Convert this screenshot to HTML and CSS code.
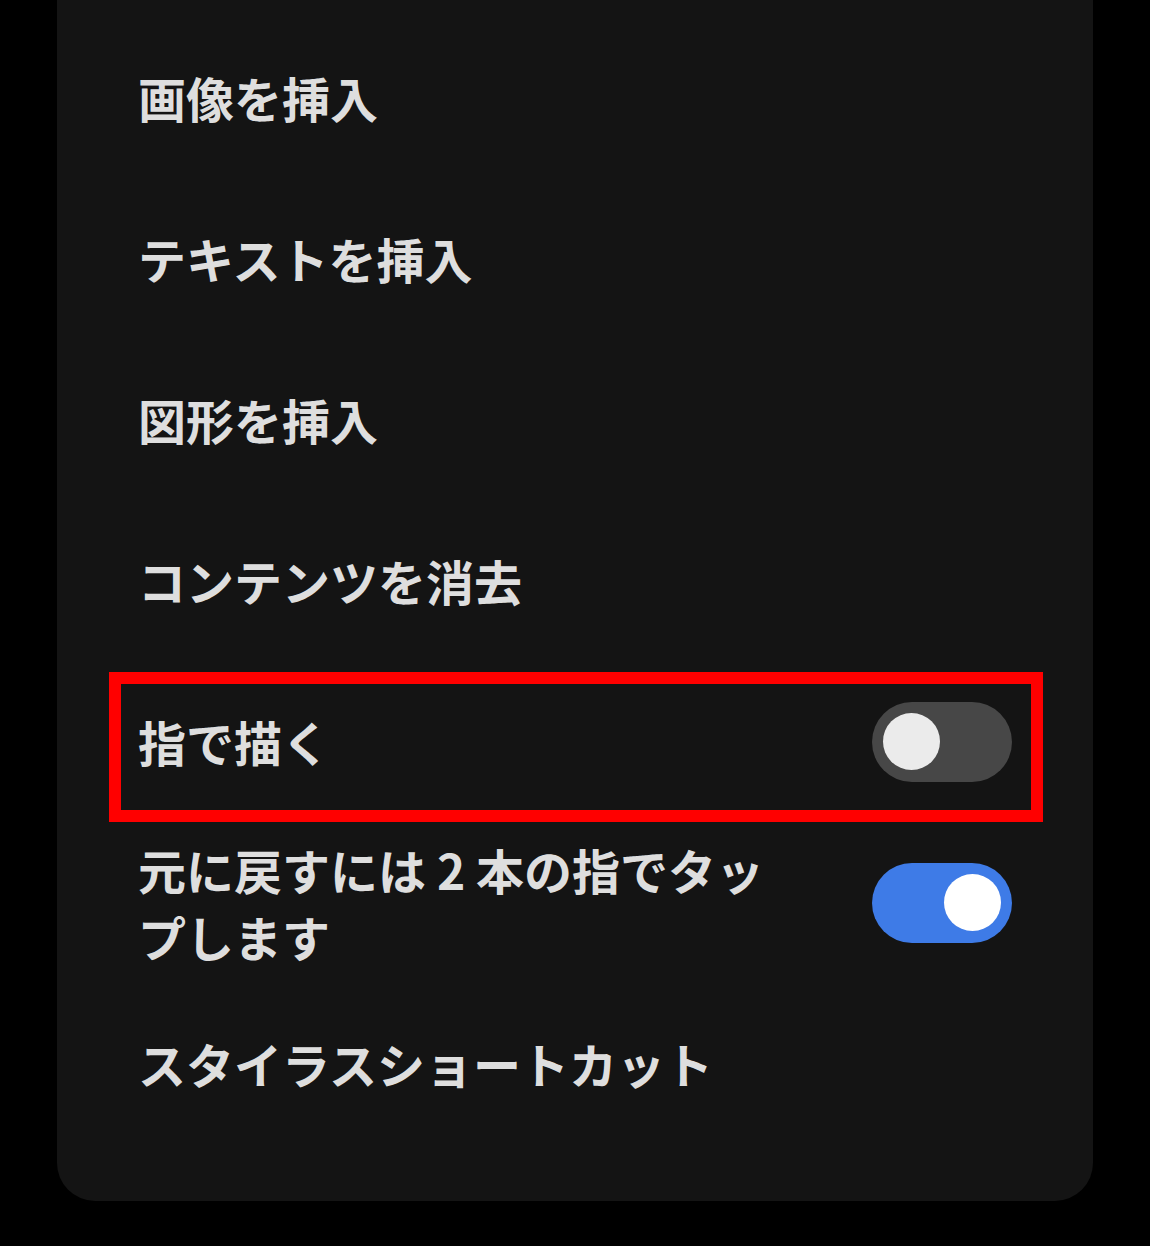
FILE: index.html
```html
<!DOCTYPE html>
<html lang="ja">
<head>
<meta charset="utf-8">
<title>メニュー</title>
<link rel="stylesheet" href="styles.css">
</head>
<body>
<div class="panel">
  <div class="row"><span class="label">画像を挿入</span></div>
  <div class="row"><span class="label">テキストを挿入</span></div>
  <div class="row"><span class="label">図形を挿入</span></div>
  <div class="row"><span class="label">コンテンツを消去</span></div>
  <div class="row highlight">
    <span class="label">指で描く</span>
    <span class="toggle off"><span class="knob"></span></span>
  </div>
  <div class="row">
    <span class="label">元に戻すには 2 本の指でタップします</span>
    <span class="toggle on"><span class="knob"></span></span>
  </div>
  <div class="row"><span class="label">スタイラスショートカット</span></div>
</div>
</body>
</html>
```

FILE: styles.css
```css
html, body {
  margin: 0;
  padding: 0;
  background: #000;
}

body {
  width: 1150px;
  height: 1246px;
  overflow: hidden;
  font-family: "Noto Sans CJK JP", "Noto Sans", sans-serif;
}

.panel {
  margin-left: 57px;
  width: 1036px;
  background: #141414;
  border-radius: 0 0 38px 38px;
  padding: 17px 0 57px;
  box-sizing: border-box;
}

.row {
  position: relative;
  display: flex;
  align-items: center;
  justify-content: space-between;
  height: 161px;
  padding: 0 81px;
  box-sizing: border-box;
}

.label {
  color: #dedede;
  font-size: 48px;
  font-weight: 700;
  line-height: 67px;
  max-width: 650px;
}

.toggle {
  flex: none;
  width: 140px;
  height: 80px;
  border-radius: 40px;
  display: flex;
  align-items: center;
  padding: 0 11px;
  box-sizing: border-box;
}

.toggle .knob {
  width: 57px;
  height: 57px;
  border-radius: 50%;
}

.toggle.off {
  background: #474747;
  justify-content: flex-start;
}

.toggle.off .knob {
  background: #ebebeb;
}

.toggle.on {
  background: #3e7be7;
  justify-content: flex-end;
}

.toggle.on .knob {
  background: #ffffff;
}

.row.highlight::after {
  content: "";
  position: absolute;
  top: 11px;
  bottom: 0;
  left: 52px;
  right: 50px;
  border: 12px solid #ff0000;
  pointer-events: none;
}
```
